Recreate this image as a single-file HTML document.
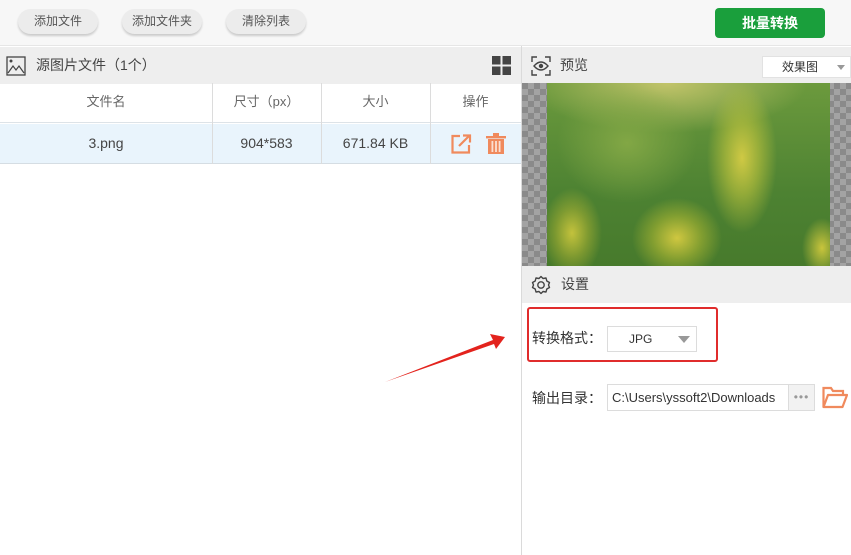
<!DOCTYPE html>
<html><head><meta charset="utf-8"><style>
*{box-sizing:border-box;margin:0;padding:0}
body{width:851px;height:555px;overflow:hidden;background:#fff;font-family:"Liberation Sans","Noto Sans CJK SC",sans-serif;font-size:13px;color:#444;position:relative}
.abs{position:absolute}
.top{left:0;top:0;width:851px;height:46px;background:#f7f7f7;border-bottom:1px solid #e6e6e6}
.btn{top:9px;height:25px;border-radius:13px;background:#ececec;box-shadow:0 2px 2px rgba(0,0,0,.18);font-size:12px;color:#555;text-align:center;line-height:25px}
.green{left:715px;top:8px;width:110px;height:30px;background:#1a9f3c;border-radius:4px;color:#fff;font-size:14px;font-weight:bold;text-align:center;line-height:30px}
.hdr{height:37px;background:#eeeeee;line-height:37px;font-size:14px;color:#444}
.cell{text-align:center;line-height:40px}
.chk{background-color:#8a8a8a;background-image:linear-gradient(45deg,#a3a3a3 25%,transparent 25%,transparent 75%,#a3a3a3 75%),linear-gradient(45deg,#a3a3a3 25%,transparent 25%,transparent 75%,#a3a3a3 75%);background-size:12px 12px;background-position:0 0,6px 6px}
</style></head><body>
<div class="abs top"></div>
<div class="abs btn" style="left:18px;width:80px">添加文件</div>
<div class="abs btn" style="left:122px;width:80px">添加文件夹</div>
<div class="abs btn" style="left:226px;width:80px">清除列表</div>
<div class="abs green">批量转换</div>

<div class="abs hdr" style="left:0;top:47px;width:521px;padding-left:36px">源图片文件（1个）</div>
<svg class="abs" style="left:6px;top:56px" width="20" height="20" viewBox="0 0 20 20"><rect x="1" y="1" width="18" height="18" fill="none" stroke="#444" stroke-width="1.3"/><circle cx="5" cy="5" r="1.5" fill="#444"/><path d="M2 17 L7 10 L10 14 L13 10 L18 17" fill="none" stroke="#444" stroke-width="1.2"/></svg>
<svg class="abs" style="left:492px;top:56px" width="19" height="19"><rect x="0" y="0" width="8.5" height="8.5" fill="#444"/><rect x="10.5" y="0" width="8.5" height="8.5" fill="#444"/><rect x="0" y="10.5" width="8.5" height="8.5" fill="#444"/><rect x="10.5" y="10.5" width="8.5" height="8.5" fill="#444"/></svg>

<div class="abs" style="left:0;top:83px;width:521px;height:40px;border-bottom:1px solid #dde3e8"></div>
<div class="abs" style="left:0;top:124px;width:521px;height:40px;background:#e9f4fc;border-bottom:1px solid #d5dde3"></div>
<div class="abs" style="left:212px;top:83px;width:1px;height:81px;background:#dcdcdc"></div>
<div class="abs" style="left:321px;top:83px;width:1px;height:81px;background:#dcdcdc"></div>
<div class="abs" style="left:430px;top:83px;width:1px;height:81px;background:#dcdcdc"></div>
<div class="abs cell" style="left:0;top:82px;width:212px;color:#666">文件名</div>
<div class="abs cell" style="left:212px;top:82px;width:109px;color:#666">尺寸（px）</div>
<div class="abs cell" style="left:321px;top:82px;width:109px;color:#666">大小</div>
<div class="abs cell" style="left:430px;top:82px;width:91px;color:#666">操作</div>
<div class="abs cell" style="left:0;top:123px;width:212px;font-size:14px">3.png</div>
<div class="abs cell" style="left:212px;top:123px;width:109px;font-size:14px">904*583</div>
<div class="abs cell" style="left:321px;top:123px;width:109px;font-size:14px">671.84 KB</div>
<svg class="abs" style="left:451px;top:134px" width="21" height="20" viewBox="0 0 21 20"><path d="M9 2H1.5V18.5H18V11" fill="none" stroke="#f08a5d" stroke-width="2.2"/><path d="M8 12L18 2M12 1.5H19V8.5" fill="none" stroke="#f08a5d" stroke-width="2.2"/></svg>
<svg class="abs" style="left:486px;top:133px" width="20" height="21" viewBox="0 0 20 21"><rect x="0" y="3" width="20" height="2.4" fill="#f08a5d"/><rect x="7" y="0" width="6" height="3" fill="#f08a5d"/><path d="M2 6H18V21H2Z" fill="#f08a5d"/><rect x="5.5" y="8" width="1.8" height="11" fill="#fbe0d3"/><rect x="9.1" y="8" width="1.8" height="11" fill="#fbe0d3"/><rect x="12.7" y="8" width="1.8" height="11" fill="#fbe0d3"/></svg>

<div class="abs" style="left:521px;top:46px;width:1px;height:509px;background:#dadada"></div>

<div class="abs hdr" style="left:522px;top:47px;width:329px;padding-left:38px">预览</div>
<svg class="abs" style="left:531px;top:56px" width="20" height="20" viewBox="0 0 20 20"><path d="M1 6V1H6M14 1H19V6M19 14V19H14M6 19H1V14" fill="none" stroke="#444" stroke-width="1.4"/><path d="M3 10Q10 2 17 10Q10 18 3 10Z" fill="none" stroke="#444" stroke-width="1.4"/><circle cx="10" cy="10" r="2.2" fill="#444"/></svg>
<div class="abs" style="left:762px;top:56px;width:89px;height:22px;background:#fff;border:1px solid #e2e2e2;font-size:12px;line-height:20px;padding-left:19px;color:#333">效果图</div>
<div class="abs" style="left:837px;top:65px;border-left:4px solid transparent;border-right:4px solid transparent;border-top:5px solid #999"></div>
<div class="abs chk" style="left:522px;top:83px;width:329px;height:183px"></div>
<div class="abs" style="left:547px;top:83px;width:283px;height:183px;overflow:hidden;background:
radial-gradient(ellipse 35px 75px at 195px 75px,#cfc944 0%,rgba(190,195,60,.6) 50%,transparent 100%),
radial-gradient(ellipse 45px 40px at 130px 155px,#cfc740 0%,rgba(185,190,50,.5) 55%,transparent 100%),
radial-gradient(ellipse 30px 45px at 25px 150px,#c3c23c 0%,rgba(175,180,50,.5) 55%,transparent 100%),
radial-gradient(ellipse 20px 30px at 275px 165px,#c9c53c 0%,transparent 100%),
radial-gradient(ellipse 70px 60px at 80px 60px,#82a745 0%,transparent 100%),
radial-gradient(ellipse 140px 50px at 120px 0px,#c2c46a 0%,transparent 100%),
linear-gradient(180deg,#6c9a3d,#4d8232 60%,#477a2c)"></div>

<div class="abs hdr" style="left:522px;top:266px;width:329px;padding-left:39px">设置</div>
<svg class="abs" style="left:531px;top:275px" width="20" height="20" viewBox="0 0 20 20"><path d="M10 1.5L12 3.5L15 3L15.8 6L18.5 7.5L17.5 10L18.5 12.5L15.8 14L15 17L12 16.5L10 18.5L8 16.5L5 17L4.2 14L1.5 12.5L2.5 10L1.5 7.5L4.2 6L5 3L8 3.5Z" fill="none" stroke="#444" stroke-width="1.4" stroke-linejoin="round"/><circle cx="10" cy="10" r="3.2" fill="none" stroke="#444" stroke-width="1.4"/></svg>

<div class="abs" style="left:527px;top:307px;width:191px;height:55px;border:2.5px solid #e02c2c;border-radius:3px"></div>
<div class="abs" style="left:532px;top:328px;font-size:14px;color:#333">转换格式：</div>
<div class="abs" style="left:607px;top:326px;width:90px;height:26px;border:1px solid #dcdcdc;background:#fff;font-size:12px;line-height:24px;padding-left:21px;color:#333">JPG</div>
<div class="abs" style="left:678px;top:336px;border-left:6px solid transparent;border-right:6px solid transparent;border-top:7px solid #999"></div>

<div class="abs" style="left:532px;top:388px;font-size:14px;color:#333">输出目录：</div>
<div class="abs" style="left:607px;top:384px;width:182px;height:27px;border:1px solid #dcdcdc;background:#fff;font-size:13px;line-height:25px;padding-left:4px;color:#333;white-space:nowrap;overflow:hidden">C:\Users\yssoft2\Downloads</div>
<div class="abs" style="left:788px;top:384px;width:27px;height:27px;border:1px solid #dcdcdc;background:#f2f2f2;color:#999;text-align:center;line-height:24px;font-size:12px;letter-spacing:1px">•••</div>
<svg class="abs" style="left:822px;top:385px" width="26" height="24" viewBox="0 0 26 24"><path d="M1.5 22V3H9L11 6H21V10" fill="none" stroke="#f08a5d" stroke-width="2.2"/><path d="M1.5 22L6 10H25L20.5 22Z" fill="none" stroke="#f08a5d" stroke-width="2.2" stroke-linejoin="round"/></svg>

<svg class="abs" style="left:380px;top:325px" width="135" height="62" viewBox="0 0 135 62"><path d="M5 57L113 15L110 9L125 12L116 24L114 19L5 57Z" fill="#e3231d"/></svg>
</body></html>
